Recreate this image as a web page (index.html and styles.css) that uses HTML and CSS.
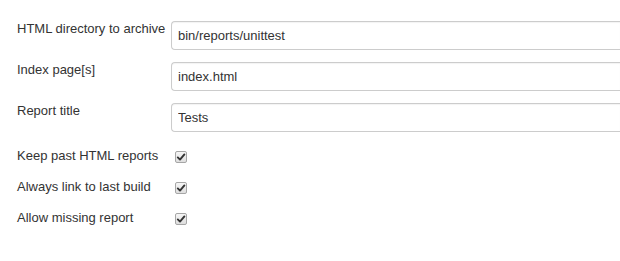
FILE: index.html
```html
<!DOCTYPE html>
<html lang="en">
  <head>
    <meta charset="UTF-8" />
    <title>Publish HTML reports</title>
    <link rel="stylesheet" href="styles.css">
  </head>

  <body>
    <form class="config">
      <div class="row">
        <label class="label" for="dir">HTML directory to archive</label>
        <input class="field" type="text" id="dir" value="bin/reports/unittest" />
      </div>

      <div class="row">
        <label class="label" for="pages">Index page[s]</label>
        <input class="field" type="text" id="pages" value="index.html" />
      </div>

      <div class="row">
        <label class="label" for="title">Report title</label>
        <input class="field" type="text" id="title" value="Tests" />
      </div>

      <div class="checks">
        <div class="check-row">
          <span class="label">Keep past HTML reports</span>
          <span class="check">
            <svg width="10" height="10" viewBox="0 0 10 10"><path d="M1.8 5.4 L4 7.6 L8.4 2.4" /></svg>
          </span>
        </div>
        <div class="check-row">
          <span class="label">Always link to last build</span>
          <span class="check">
            <svg width="10" height="10" viewBox="0 0 10 10"><path d="M1.8 5.4 L4 7.6 L8.4 2.4" /></svg>
          </span>
        </div>
        <div class="check-row">
          <span class="label">Allow missing report</span>
          <span class="check">
            <svg width="10" height="10" viewBox="0 0 10 10"><path d="M1.8 5.4 L4 7.6 L8.4 2.4" /></svg>
          </span>
        </div>
      </div>
    </form>
  </body>
</html>
```

FILE: styles.css
```css
* {
  margin: 0;
  padding: 0;
  box-sizing: border-box;
}

body {
  font-family: "Liberation Sans", Arial, sans-serif;
  font-size: 13px;
  color: #333;
  background-color: #fff;
  padding: 21px 0 0 17px;
}

.config {
  display: flex;
  flex-direction: column;
  gap: 12px;
}

.row {
  display: grid;
  grid-template-columns: 154px 1fr;
  align-items: start;
}

.label {
  line-height: 16px;
  white-space: nowrap;
}

.field {
  width: 100%;
  height: 29px;
  padding: 0 6px;
  font-family: inherit;
  font-size: 13px;
  color: #333;
  background-color: #fff;
  border: 1px solid #ccc;
  border-right: none;
  border-radius: 4px 0 0 4px;
  box-shadow: inset 0 1px 1px rgba(0, 0, 0, 0.05);
  outline: none;
}

.checks {
  display: flex;
  flex-direction: column;
  gap: 15px;
  margin-top: 4px;
}

.check-row {
  display: grid;
  grid-template-columns: 158px 12px;
  align-items: start;
}

.check {
  width: 12px;
  height: 12px;
  margin-top: 3px;
  display: flex;
  align-items: center;
  justify-content: center;
  border: 1px solid #a6a6a6;
  border-radius: 2px;
  background: linear-gradient(#f6f6f6, #dedede);
}

.check svg path {
  fill: none;
  stroke: #333;
  stroke-width: 1.9;
  stroke-linecap: round;
  stroke-linejoin: round;
}
```
